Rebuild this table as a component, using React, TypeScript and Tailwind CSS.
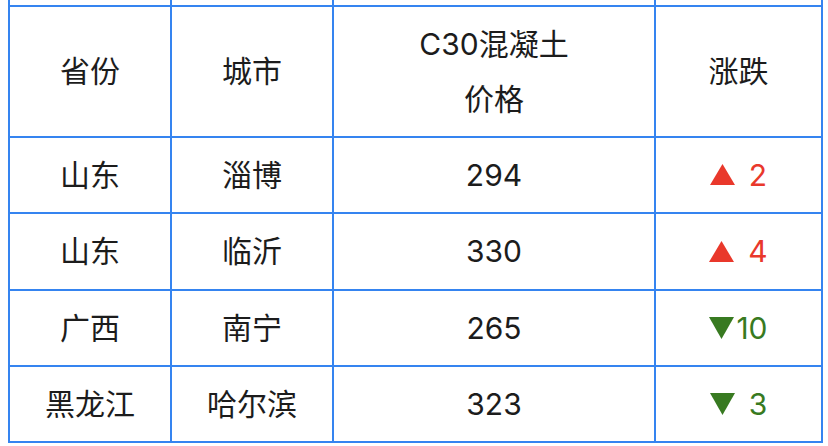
const rows = [
  { province: "山东", city: "淄博", price: 294, change: 2 },
  { province: "山东", city: "临沂", price: 330, change: 4 },
  { province: "广西", city: "南宁", price: 265, change: -10 },
  { province: "黑龙江", city: "哈尔滨", price: 323, change: -3 },
];

function Triangle({ up }: { up: boolean }) {
  return (
    <svg width="25" height="22" viewBox="0 0 25 22" className="shrink-0">
      {up ? (
        <polygon points="12.5,0 25,21 0,21" fill="#e9382b" />
      ) : (
        <polygon points="0,0 25,0 12.5,22" fill="#387a21" />
      )}
    </svg>
  );
}

function Change({ value }: { value: number }) {
  const up = value > 0;
  const abs = Math.abs(value);
  return (
    <div className={`flex items-center justify-center ${up ? "text-[#e9382b]" : "text-[#387a21]"}`}>
      <Triangle up={up} />
      <span className={abs < 10 ? "ml-[14px]" : "ml-[2px]"}>{abs}</span>
    </div>
  );
}

const cell = "bg-white flex items-center justify-center text-center";

export default function App() {
  return (
    <div className="w-[828px] h-[446px] bg-white overflow-hidden font-[Inter,'Noto_Sans_CJK_SC',sans-serif] text-[30px] text-[#1c1c1c]">
      <div className="ml-[8px] w-[815px] grid grid-cols-[160px_160px_320px_165px] grid-rows-[5px_129px_74px_75px_74px_74px] gap-[2px] px-[2px] pb-[2px] bg-[#3584f0]">
        {/* tail of the row above */}
        <div className="bg-white" />
        <div className="bg-white" />
        <div className="bg-white" />
        <div className="bg-white" />

        <div className={cell}>省份</div>
        <div className={cell}>城市</div>
        <div className={`${cell} leading-[55px]`}>
          C30混凝土
          <br />
          价格
        </div>
        <div className={cell}>涨跌</div>

        {rows.map((r, i) => (
          <div key={i} className="contents">
            <div className={cell}>{r.province}</div>
            <div className={cell}>{r.city}</div>
            <div className={cell}>{r.price}</div>
            <div className={cell}>
              <Change value={r.change} />
            </div>
          </div>
        ))}
      </div>
    </div>
  );
}
